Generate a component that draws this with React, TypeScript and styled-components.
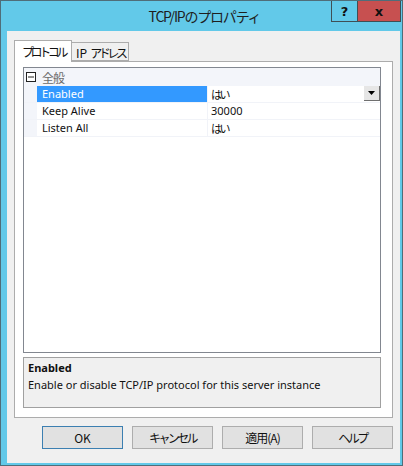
import React from "react";
import styled, { createGlobalStyle } from "styled-components";

const GlobalStyle = createGlobalStyle`
  html, body {
    margin: 0;
    padding: 0;
    background: #fff;
  }
  * {
    box-sizing: border-box;
  }
`;

const LATIN = `"Noto Sans", "Noto Sans CJK JP", sans-serif`;
const JP = `"Noto Sans CJK JP", "Noto Sans", sans-serif`;

const Window = styled.div`
  width: 403px;
  height: 466px;
  border: 1px solid #4f6d79;
  background: #62c9e9;
  display: flex;
  flex-direction: column;
  font-family: ${LATIN};
`;

const TitleBar = styled.div`
  height: 30px;
  display: grid;
  grid-template-columns: 1fr auto 1fr;
  align-items: start;
`;

const Caption = styled.div`
  grid-column: 2;
  align-self: center;
  font-family: ${JP};
  font-size: 14px;
  letter-spacing: -1.2px;
  color: #1e1e1e;
  padding-left: 6px;
  margin-top: -1px;
`;

const CaptionButtons = styled.div`
  grid-column: 3;
  justify-self: end;
  display: flex;
  margin-right: 1px;
`;

const CaptionButton = styled.div<{ $close?: boolean }>`
  width: ${p => (p.$close ? 43 : 27)}px;
  height: 21px;
  display: flex;
  align-items: center;
  justify-content: center;
  background: ${p => (p.$close ? "#c75050" : "#62c9e9")};
  border: 1px solid #3f4f55;
  border-top: none;
  border-left-width: ${p => (p.$close ? 0 : 1)}px;
  color: #111;
  font-family: "DejaVu Sans", sans-serif;
  font-weight: bold;
  font-size: 13px;
`;

const Client = styled.div`
  flex: 1;
  margin: 0 2px 2px 6px;
  background: #f0f0f0;
  padding: 9px 7px 0 7px;
  display: flex;
  flex-direction: column;
`;

const TabStrip = styled.div`
  display: flex;
  align-items: flex-end;
  height: 22px;
  margin-bottom: -1px;
  position: relative;
  z-index: 1;
`;

const Tab = styled.div<{ $active?: boolean }>`
  height: ${p => (p.$active ? 22 : 19)}px;
  padding: ${p => (p.$active ? "2px 6px 0 7px" : "1px 3px 0 4px")};
  background: ${p => (p.$active ? "#fff" : "#f0f0f0")};
  border: 1px solid #acacac;
  border-bottom: ${p => (p.$active ? "none" : "1px solid #acacac")};
  margin-bottom: ${p => (p.$active ? 0 : 1)}px;
  border-left-width: ${p => (p.$active ? 1 : 0)}px;
  font-family: ${JP};
  font-size: 12px;
  letter-spacing: -3.4px;
  color: #111;
  white-space: nowrap;
  line-height: 17px;
`;

const TabLatin = styled.span`
  letter-spacing: 0;
  margin-right: 3px;
`;

const Panel = styled.div`
  height: 357px;
  background: #fff;
  border: 1px solid #acacac;
  padding: 5px 11px 9px 8px;
  display: flex;
  flex-direction: column;
  gap: 4px;
`;

const Grid = styled.div`
  flex: 1;
  border: 1px solid #828790;
  background: #fff;
  display: flex;
  flex-direction: column;
`;

const CategoryRow = styled.div`
  height: 18px;
  background: #f3f5fa;
  display: flex;
  align-items: center;
  padding-left: 2px;
  gap: 6px;
`;

const CategoryLabel = styled.span`
  font-family: ${JP};
  font-size: 12px;
  color: #6b6b6b;
  letter-spacing: -1px;
`;

const Row = styled.div`
  height: 17px;
  display: grid;
  grid-template-columns: 13px 170px 1fr;
  border-bottom: 1px solid #f1f3f8;
`;

const Gutter = styled.div`
  background: #f3f5fa;
`;

const NameCell = styled.div<{ $selected?: boolean }>`
  padding-left: 5px;
  font-size: 11px;
  line-height: 16px;
  color: ${p => (p.$selected ? "#fff" : "#111")};
  background: ${p => (p.$selected ? "#3399ff" : "transparent")};
  white-space: nowrap;
`;

const ValueCell = styled.div`
  border-left: 1px solid #f1f3f8;
  padding-left: 3px;
  font-family: ${LATIN};
  font-size: 11px;
  line-height: 16px;
  color: #111;
  display: flex;
  justify-content: space-between;
`;

const Kana = styled.span`
  font-family: ${JP};
  font-size: 11px;
  letter-spacing: -2.5px;
`;

const DropButton = styled.div`
  width: 16px;
  height: 15px;
  background: #e6e6e6;
  border-right: 1px solid #6f6f6f;
  border-bottom: 1px solid #6f6f6f;
  display: flex;
  align-items: center;
  justify-content: center;
`;

const Description = styled.div`
  height: 51px;
  background: #f0f0f0;
  border: 1px solid #a0a0a0;
  padding: 2px 4px;
  color: #111;
  font-size: 11px;
`;

const DescTitle = styled.div`
  font-weight: bold;
  line-height: 16px;
`;

const DescText = styled.div`
  line-height: 18px;
`;

const ButtonRow = styled.div`
  display: flex;
  justify-content: flex-end;
  gap: 9px;
  margin-top: 8px;
`;

const Button = styled.div<{ $default?: boolean }>`
  width: 81px;
  height: 23px;
  background: #e1e1e1;
  border: 1px solid ${p => (p.$default ? "#3c7fb1" : "#adadad")};
  display: flex;
  align-items: center;
  justify-content: center;
  font-family: ${JP};
  font-size: 12px;
  color: #111;
`;

const ButtonLabel = styled.span<{ $squeeze: number }>`
  letter-spacing: ${p => p.$squeeze}px;
`;

const MinusBox = () => (
  <svg width="10" height="10" viewBox="0 0 10 10">
    <rect x="0.5" y="0.5" width="9" height="9" fill="#fff" stroke="#222" />
    <line x1="2" y1="5" x2="8" y2="5" stroke="#222" strokeWidth="1" />
  </svg>
);

const DownArrow = () => (
  <svg width="7" height="4" viewBox="0 0 7 4">
    <polygon points="0,0 7,0 3.5,4" fill="#000" />
  </svg>
);

const props = [
  { name: "Enabled", value: "はい", kana: true, selected: true },
  { name: "Keep Alive", value: "30000", kana: false, selected: false },
  { name: "Listen All", value: "はい", kana: true, selected: false },
];

const buttons = [
  { label: "OK", squeeze: 0, def: true },
  { label: "キャンセル", squeeze: -2.6, def: false },
  { label: "適用(A)", squeeze: -1, def: false },
  { label: "ヘルプ", squeeze: -2.5, def: false },
];

export default function App() {
  return (
    <>
      <GlobalStyle />
      <Window>
        <TitleBar>
          <Caption>TCP/IPのプロパティ</Caption>
          <CaptionButtons>
            <CaptionButton>?</CaptionButton>
            <CaptionButton $close>x</CaptionButton>
          </CaptionButtons>
        </TitleBar>
        <Client>
          <TabStrip>
            <Tab $active>プロトコル</Tab>
            <Tab>
              <TabLatin>IP</TabLatin>
              アドレス
            </Tab>
          </TabStrip>
          <Panel>
            <Grid>
              <CategoryRow>
                <MinusBox />
                <CategoryLabel>全般</CategoryLabel>
              </CategoryRow>
              {props.map(p => (
                <Row key={p.name}>
                  <Gutter />
                  <NameCell $selected={p.selected}>{p.name}</NameCell>
                  <ValueCell>
                    {p.kana ? <Kana>{p.value}</Kana> : <span>{p.value}</span>}
                    {p.selected && (
                      <DropButton>
                        <DownArrow />
                      </DropButton>
                    )}
                  </ValueCell>
                </Row>
              ))}
            </Grid>
            <Description>
              <DescTitle>Enabled</DescTitle>
              <DescText>Enable or disable TCP/IP protocol for this server instance</DescText>
            </Description>
          </Panel>
          <ButtonRow>
            {buttons.map(b => (
              <Button key={b.label} $default={b.def}>
                <ButtonLabel $squeeze={b.squeeze}>{b.label}</ButtonLabel>
              </Button>
            ))}
          </ButtonRow>
        </Client>
      </Window>
    </>
  );
}
